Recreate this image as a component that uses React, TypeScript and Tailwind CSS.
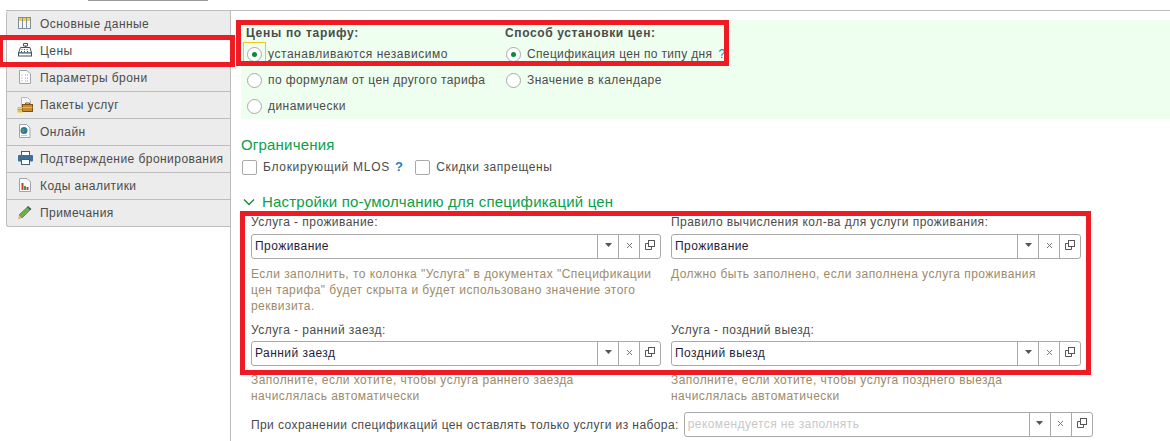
import React from "react";

function Radio({ on }: { on?: boolean }) {
  return (
    <span className="flex h-[15px] w-[15px] shrink-0 items-center justify-center rounded-full border border-[#a9a9a9] bg-white">
      {on && <span className="h-[5px] w-[5px] rounded-full bg-[#0a8a3c]" />}
    </span>
  );
}

function Icon({ kind }: { kind: string }) {
  const c = "h-[16px] w-[16px]";
  switch (kind) {
    case "table":
      return (
        <svg viewBox="0 0 16 16" className={c}>
          <rect x="1.500" y="1.500" width="12" height="11" fill="#f4f6f8" stroke="#7f8fa0" />
          <rect x="2" y="2" width="11" height="3" fill="#f5cf3f" />
          <path d="M5.500 2v10M9.500 2v10" stroke="#7f8fa0" />
        </svg>
      );
    case "cash":
      return (
        <svg viewBox="0 0 16 16" className={c}>
          <path d="M6.500 0.500h4v2.500h-4zM8.500 3v1.500" fill="#fff" stroke="#3f5363" />
          <path d="M3.500 4.500h9.500l1.500 5.500h-13z" fill="#fff" stroke="#3f5363" />
          <rect x="1.500" y="10" width="13" height="3" fill="#fff" stroke="#3f5363" />
          <path d="M4.500 6.500h1M7 6.500h1M9.500 6.500h1M4 8.500h1M7 8.500h1M10 8.500h1" stroke="#3f5363" />
        </svg>
      );
    case "doc":
      return (
        <svg viewBox="0 0 16 16" className={c}>
          <path d="M2.500 0.500h7.500l3.500 3.500v9.500h-11z" fill="#fff" stroke="#9aa5b1" />
          <path d="M4.500 5h2M4.500 8h2M4.500 11h2" stroke="#8a97a5" strokeDasharray="1 1" />
          <path d="M8 5h3M8 8h3M8 11h3" stroke="#e0785a" strokeDasharray="1 1" />
        </svg>
      );
    case "pack":
      return (
        <svg viewBox="0 0 16 16" className={c}>
          <path d="M4.500 0.500h6l3 3v6h-9z" fill="#f7f7f7" stroke="#b8b8b8" />
          <rect x="5.500" y="7.500" width="10" height="7" fill="#c98a2d" stroke="#7d5214" />
          <path d="M8.500 7.500V6h4v1.500" fill="none" stroke="#7d5214" />
          <path d="M5.500 10.500h10" stroke="#e8b766" />
          <rect x="0.500" y="10" width="5" height="1.500" fill="#f2c200" />
          <rect x="0.500" y="12" width="5" height="1.500" fill="#c9a000" />
          <rect x="0.500" y="14" width="5" height="1.500" fill="#f2c200" />
        </svg>
      );
    case "web":
      return (
        <svg viewBox="0 0 16 16" className={c}>
          <path d="M2.500 0.500h7l3.500 3.500v9.500h-10.500z" fill="#fff" stroke="#9aa5b1" />
          <circle cx="7" cy="6.500" r="3.500" fill="#2a7aa0" />
          <path d="M4.500 5.500c2-1 3.500 0 3 1.500s-2 2-2.500 0.500z" fill="#4fa13a" />
          <path d="M4.500 11.500h6" stroke="#7f8fa0" strokeDasharray="1 1" />
        </svg>
      );
    case "print":
      return (
        <svg viewBox="0 0 16 16" className={c}>
          <rect x="4.500" y="0.500" width="8" height="4" fill="#fff" stroke="#3e5f7a" />
          <rect x="1" y="4" width="15" height="6.500" rx="1" fill="#3e6f96" />
          <rect x="4.500" y="8.500" width="8" height="5" fill="#fff" stroke="#3e5f7a" />
        </svg>
      );
    case "chart":
      return (
        <svg viewBox="0 0 16 16" className={c}>
          <path d="M2.500 0.500h7.500l3.500 3.500v9.500h-11z" fill="#fff" stroke="#9aa5b1" />
          <rect x="4.500" y="5" width="2" height="7" fill="#d6392b" />
          <rect x="7" y="8" width="2" height="4" fill="#3aa04a" />
          <rect x="9.500" y="9" width="2" height="3" fill="#d6392b" />
        </svg>
      );
    default:
      return (
        <svg viewBox="0 0 16 16" className={c}>
          <path d="M10.500 2l3 2.500-8.500 8.500-3-3z" fill="#6ab04c" stroke="#3f7a2c" strokeWidth="0.700" />
          <path d="M11 1l3.500 3-1.200 1.300-3.300-3z" fill="#44586a" />
          <path d="M2 10l3 3-4 1.500z" fill="#f0b070" />
        </svg>
      );
  }
}

function Tab({ icon, label, active }: { icon: string; label: string; active?: boolean }) {
  return (
    <div
      className={`flex h-[27px] items-center border-b border-l border-[#bdbdbd] first:rounded-tl-[3px] last:rounded-bl-[3px] ${
        active ? "bg-white" : "bg-[#ececec]"
      }`}
    >
      <span className="flex w-[33px] shrink-0 pl-[10px]">
        <Icon kind={icon} />
      </span>
      <span className="whitespace-nowrap">{label}</span>
    </div>
  );
}

function Field({ value, placeholder, w }: { value?: string; placeholder?: boolean; w: string }) {
  return (
    <div className={`flex h-[25px] items-stretch rounded-[3px] border border-[#a9a9a9] bg-white ${w}`}>
      <span className={`min-w-0 flex-1 truncate pl-[3px] leading-[23px] ${placeholder ? "text-[#c8c8c8]" : "text-[#1f1f3a]"}`}>
        {value}
      </span>
      <span className="flex w-[21px] items-center justify-center border-l border-[#a9a9a9]">
        <svg viewBox="0 0 7 4" className="mb-[3px] h-[4px] w-[7px]"><path d="M0 0h7L3.500 4z" fill="#555" /></svg>
      </span>
      <span className="flex w-[21px] items-center justify-center border-l border-[#a9a9a9]">
        <svg viewBox="0 0 7 7" className="mb-[3px] h-[7px] w-[7px]"><path d="M1 1l5 5M6 1L1 6" stroke="#777" strokeWidth="1" /></svg>
      </span>
      <span className="flex w-[21px] items-center justify-center border-l border-[#a9a9a9]">
        <svg viewBox="0 0 10 10" className="mb-[3px] h-[10px] w-[10px]">
          <rect x="3.500" y="0.500" width="6" height="6" fill="#fff" stroke="#555" />
          <path d="M3.500 3.500h-3v6h6v-3" fill="none" stroke="#555" />
        </svg>
      </span>
    </div>
  );
}

const tabs = [
  ["table", "Основные данные"],
  ["cash", "Цены"],
  ["doc", "Параметры брони"],
  ["pack", "Пакеты услуг"],
  ["web", "Онлайн"],
  ["print", "Подтверждение бронирования"],
  ["chart", "Коды аналитики"],
  ["pen", "Примечания"],
];

export default function App() {
  return (
    <div className="relative flex h-[441px] w-[1170px] overflow-hidden bg-white font-['Liberation_Sans',Arial,sans-serif] text-[12px] tracking-[0.45px] text-[#4b4b4b]">
      <div className="absolute left-[88px] top-0 h-px w-[120px] bg-[#9a9a9a]" />
      <div className="w-[230px] shrink-0 pl-[6px] pt-[10px]">
        <div className="border-t border-[#bdbdbd]">
          {tabs.map(([i, l], n) => (
            <Tab key={l} icon={i} label={l} active={n === 1} />
          ))}
        </div>
      </div>
      <div className="mt-[10px] min-w-0 flex-1 border-l border-t border-[#bdbdbd] pl-[10px]">
        <div className="mt-[9px] h-[99px] bg-[#eefff0] pl-[5px] pt-[6px]">
          <div className="flex">
            <div className="w-[259px]">
              <div className="h-[15px] font-bold leading-[15px] tracking-[0.7px]">Цены по тарифу:</div>
              <div className="flex h-[26px] items-center gap-[6px] pl-[1px] tracking-[0.55px]">
                <span className="relative">
                  <Radio on />
                  <span className="absolute -left-[4px] -top-[5px] h-[20px] w-[23px] border border-[#f5c518]" />
                </span>
                <span>устанавливаются независимо</span>
              </div>
              <div className="flex h-[26px] items-center gap-[6px] pl-[1px] tracking-[0.4px]"><Radio /><span>по формулам от цен другого тарифа</span></div>
              <div className="flex h-[26px] items-center gap-[6px] pl-[1px]"><Radio /><span>динамически</span></div>
            </div>
            <div>
              <div className="h-[15px] font-bold leading-[15px] tracking-[0.63px]">Способ установки цен:</div>
              <div className="flex h-[26px] items-center gap-[6px] pl-[1px] tracking-[0.35px]"><Radio on /><span>Спецификация цен по типу дня</span><span className="text-[#1f7fc4]">?</span></div>
              <div className="flex h-[26px] items-center gap-[6px] pl-[1px]"><Radio /><span>Значение в календаре</span></div>
            </div>
          </div>
        </div>
        <div className="mt-[17px] text-[15px] leading-[18px] tracking-[0.2px] text-[#0aa04a]">Ограничения</div>
        <div className="mt-[4px] flex h-[18px] items-center pl-[1px]">
          <span className="h-[15px] w-[15px] rounded-[2px] border border-[#a9a9a9]" />
          <span className="ml-[6px] tracking-[0.7px]">Блокирующий MLOS</span>
          <span className="ml-[5px] text-[13px] font-bold text-[#1f7fc4]">?</span>
          <span className="ml-[12px] h-[15px] w-[15px] rounded-[2px] border border-[#a9a9a9]" />
          <span className="ml-[6px] tracking-[0.6px]">Скидки запрещены</span>
        </div>
        <div className="mt-[17px] flex h-[18px] items-center pl-[2px] text-[15px] tracking-[0.2px] text-[#0aa04a]">
          <svg viewBox="0 0 12 8" className="mr-[7px] h-[8px] w-[12px]"><path d="M1 1.500l5 5 5-5" fill="none" stroke="#0a8a3c" strokeWidth="1.300" /></svg>
          <span>Настройки по-умолчанию для спецификаций цен</span>
        </div>
        <div className="mt-[3px] grid grid-cols-[410px_410px] gap-x-[10px] pl-[10px]">
          <div>
            <div className="h-[20px] leading-[16px]">Услуга - проживание:</div>
            <Field value="Проживание" w="w-[410px]" />
            <div className="mt-[7px] h-[48px] leading-[16px] text-[#9c8b6a]">
              Если заполнить, то колонка "Услуга" в документах "Спецификации<br />цен тарифа" будет скрыта и будет использовано значение этого<br />реквизита.
            </div>
          </div>
          <div>
            <div className="h-[20px] leading-[16px]">Правило вычисления кол-ва для услуги проживания:</div>
            <Field value="Проживание" w="w-[410px]" />
            <div className="mt-[7px] h-[48px] leading-[16px] text-[#9c8b6a]">Должно быть заполнено, если заполнена услуга проживания</div>
          </div>
          <div className="mt-[8px]">
            <div className="h-[19px] leading-[16px]">Услуга - ранний заезд:</div>
            <Field value="Ранний заезд" w="w-[410px]" />
            <div className="mt-[6px] leading-[16px] text-[#9c8b6a]">Заполните, если хотите, чтобы услуга раннего заезда<br />начислялась автоматически</div>
          </div>
          <div className="mt-[8px]">
            <div className="h-[19px] leading-[16px]">Услуга - поздний выезд:</div>
            <Field value="Поздний выезд" w="w-[410px]" />
            <div className="mt-[6px] leading-[16px] text-[#9c8b6a]">Заполните, если хотите, чтобы услуга позднего выезда<br />начислялась автоматически</div>
          </div>
        </div>
        <div className="mt-[8px] flex items-center pl-[10px] tracking-[0.41px]">
          <span className="whitespace-nowrap">При сохранении спецификаций цен оставлять только услуги из набора:</span>
          <Field value="рекомендуется не заполнять" placeholder w="ml-[5px] w-[409px]" />
        </div>
      </div>
      <div className="pointer-events-none absolute -left-[2px] top-[35px] h-[32px] w-[237px] border-[5px] border-[#ed1c24]" />
      <div className="pointer-events-none absolute left-[236px] top-[20px] h-[46px] w-[493px] border-[5px] border-[#ed1c24]" />
      <div className="pointer-events-none absolute left-[240px] top-[211px] h-[164px] w-[851px] border-[5px] border-[#ed1c24]" />
    </div>
  );
}
